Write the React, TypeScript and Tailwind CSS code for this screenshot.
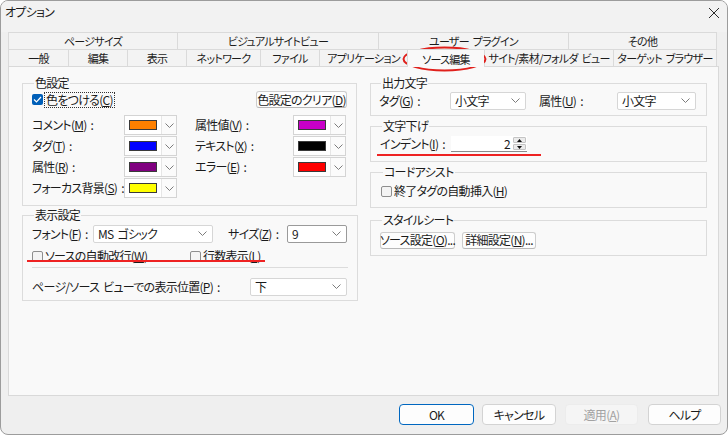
import type { ReactNode } from 'react'

const COLOR_ROWS = [
  {
    left: { label: 'コメント', key: 'M', swatch: 'bg-[#ff8000]' },
    right: { label: '属性値', key: 'V', swatch: 'bg-[#c800c8]' },
  },
  {
    left: { label: 'タグ', key: 'T', swatch: 'bg-[#0000ff]' },
    right: { label: 'テキスト', key: 'X', swatch: 'bg-black' },
  },
  {
    left: { label: '属性', key: 'R', swatch: 'bg-[#800080]' },
    right: { label: 'エラー', key: 'E', swatch: 'bg-[#ff0000]' },
  },
  {
    left: { label: 'フォーカス背景', key: 'S', swatch: 'bg-[#ffff00]' },
    right: null,
  },
]

const TOP_TABS = [
  { label: 'ページサイズ', w: 'w-[169px]' },
  { label: 'ビジュアルサイトビュー', w: 'w-[201px]' },
  { label: 'ユーザー プラグイン', w: 'w-[190px]' },
  { label: 'その他', w: 'w-[149px]' },
]

const TABS = [
  { label: '一般', w: 'w-[60px]' },
  { label: '編集', w: 'w-[59px]' },
  { label: '表示', w: 'w-[59px]' },
  { label: 'ネットワーク', w: 'w-[74px]' },
  { label: 'ファイル', w: 'w-[59px]' },
  { label: 'アプリケーション', w: 'w-[88px]' },
  { label: 'ソース編集', w: 'w-[77px]', active: true },
  { label: 'サイト/素材/フォルダ ビュー', w: 'w-[129px]' },
  { label: 'ターゲット ブラウザー', w: 'w-[104px]' },
]

function Key({ text, k, tail = '' }: { text: string; k: string; tail?: string }) {
  return (
    <span className="whitespace-nowrap">
      {text}(<u className="underline-offset-[1px]">{k}</u>){tail}
    </span>
  )
}

function Chevron() {
  return (
    <svg width="9" height="5" viewBox="0 0 9 5" className="shrink-0">
      <path d="M0.5 0.5 L4.5 4.5 L8.5 0.5" fill="none" stroke="#7c7c7c" strokeWidth="1" />
    </svg>
  )
}

function ColorCombo({ swatch }: { swatch: string }) {
  return (
    <div className="flex h-[20px] w-[53px] gap-[1px] border border-[#d4d4d4] bg-[#e6e6e6]">
      <div className="flex w-[36px] items-center justify-center bg-white">
        <div className={`h-[10px] w-[28px] border border-[#3a3a3a] ${swatch}`} />
      </div>
      <div className="flex flex-1 items-center justify-center bg-[#fbfbfb]">
        <Chevron />
      </div>
    </div>
  )
}

function Combo({ w, text, dark }: { w: string; text: string; dark?: boolean }) {
  return (
    <div
      className={`flex h-[18px] items-center justify-between rounded-[2px] border bg-white pl-[4px] pr-[5px] ${w} ${
        dark ? 'border-[#9a9a9a]' : 'border-[#d6d6d6]'
      }`}
    >
      <span className="whitespace-nowrap">{text}</span>
      <Chevron />
    </div>
  )
}

function CheckBox({ checked }: { checked?: boolean }) {
  if (checked) {
    return (
      <div className="flex h-[11px] w-[11px] shrink-0 items-center justify-center rounded-[2px] bg-[#005fb8]">
        <svg width="9" height="7" viewBox="0 0 9 7">
          <path d="M1 3.5 L3.5 6 L8 1" fill="none" stroke="white" strokeWidth="1.2" />
        </svg>
      </div>
    )
  }
  return <div className="h-[11px] w-[11px] shrink-0 rounded-[2px] border border-[#8e8e8e] bg-[#f4f4f4]" />
}

function SmallButton({ w, children }: { w: string; children: ReactNode }) {
  return (
    <div
      className={`flex h-[17px] items-center justify-center rounded-[3px] border border-[#cdcdcd] border-b-[#b8b8b8] bg-[#fdfdfd] ${w}`}
    >
      {children}
    </div>
  )
}

function Group({ title, h, className = '', children }: { title: string; h: string; className?: string; children: ReactNode }) {
  return (
    <fieldset className={`border border-[#dcdcdc] px-0 pb-0 ${h} ${className}`}>
      <legend className="ml-[2px] px-[1px] leading-[16px]">{title}</legend>
      {children}
    </fieldset>
  )
}

export default function App() {
  return (
    <div className="relative h-[435px] w-[728px] bg-white font-['Noto_Sans_CJK_JP','Noto_Sans',sans-serif] text-[12px] leading-[16px] tracking-[-0.06em] text-[#1b1b1b] [font-feature-settings:'palt'_1] [font-variant-east-asian:proportional-width] [word-spacing:2px]">
      <div className="flex h-full w-full flex-col overflow-hidden rounded-[8px] border border-[#9c9c9c] bg-[#efefef]">
        {/* title bar */}
        <div className="flex h-[31px] shrink-0 items-start justify-between bg-[#f2f2f2] pl-[4px] pr-[7px] pt-[3px]">
          <span>オプション</span>
          <svg width="12" height="12" viewBox="0 0 12 12" className="mt-[3px]">
            <path d="M1 1 L11 11 M11 1 L1 11" stroke="#2b2b2b" strokeWidth="1" />
          </svg>
        </div>

        {/* tabs */}
        <div className="ml-[7px] w-[710px] text-[11px]">
          <div className="flex h-[17px]">
            {TOP_TABS.map((t, i) => (
              <div
                key={t.label}
                className={`flex items-center justify-center border-l border-t border-[#dadada] bg-[#f3f3f3] ${t.w} ${
                  i === TOP_TABS.length - 1 ? 'border-r' : ''
                }`}
              >
                {t.label}
              </div>
            ))}
          </div>
          <div className="flex h-[17px] items-start">
            {TABS.map((t, i) => (
              <div
                key={t.label}
                className={`flex items-center justify-center overflow-hidden whitespace-nowrap border-l border-t border-[#dadada] ${t.w} ${
                  i === TABS.length - 1 ? 'border-r' : ''
                } ${t.active ? 'relative z-10 h-[18px] bg-[#f9f9f9]' : 'h-[17px] bg-[#f3f3f3]'}`}
              >
                {t.label}
              </div>
            ))}
          </div>
        </div>

        {/* panel */}
        <div className="ml-[7px] flex h-[330px] w-[711px] shrink-0 gap-[13px] border border-[#d9d9d9] bg-[#f9f9f9] pl-[13px] pt-[8px]">
          {/* left column */}
          <div className="flex w-[335px] flex-col">
            <Group title="色設定" h="h-[131px]" className="px-[9px]">
              <div className="flex h-[17px] items-center justify-between">
                <div className="flex items-center gap-[1px]">
                  <CheckBox checked />
                  <span className="border border-dotted border-[#333] px-[1px] leading-[14px]">
                    <Key text="色をつける" k="C" />
                  </span>
                </div>
                <SmallButton w="w-[91px]">
                  <Key text="色設定のクリア" k="D" />
                </SmallButton>
              </div>
              <div className="mt-[7px] flex flex-col gap-[1px]">
                {COLOR_ROWS.map((row) => (
                  <div key={row.left.key} className="flex h-[20px] items-center">
                    <div className="w-[92px]">
                      <Key text={row.left.label} k={row.left.key} tail=" :" />
                    </div>
                    <ColorCombo swatch={row.left.swatch} />
                    {row.right && (
                      <>
                        <div className="ml-[18px] w-[98px]">
                          <Key text={row.right.label} k={row.right.key} tail=" :" />
                        </div>
                        <ColorCombo swatch={row.right.swatch} />
                      </>
                    )}
                  </div>
                ))}
              </div>
            </Group>

            <Group title="表示設定" h="h-[94px]" className="mt-[1px] px-[9px]">
              <div className="mt-[1px] flex h-[19px] items-center">
                <div className="w-[61px]">
                  <Key text="フォント" k="F" tail=" :" />
                </div>
                <Combo w="w-[120px]" text="MS ゴシック" />
                <div className="ml-[15px] w-[59px]">
                  <Key text="サイズ" k="Z" tail=" :" />
                </div>
                <Combo w="w-[60px]" text="9" dark />
              </div>
              <div className="mt-[5px] flex h-[16px] items-center">
                <div className="flex w-[158px] items-center gap-[2px]">
                  <CheckBox />
                  <Key text="ソースの自動改行" k="W" />
                </div>
                <div className="flex items-center gap-[2px]">
                  <CheckBox />
                  <Key text="行数表示" k="L" />
                </div>
              </div>
              <div className="mt-[3px] h-px w-[316px] bg-[#dcdcdc]" />
              <div className="mt-[10px] flex h-[17px] items-center">
                <div className="w-[218px]">
                  <Key text="ページ/ソース ビューでの表示位置" k="P" tail=" :" />
                </div>
                <Combo w="w-[97px]" text="下" />
              </div>
            </Group>
          </div>

          {/* right column */}
          <div className="flex w-[337px] flex-col">
            <Group title="出力文字" h="h-[41px]" className="px-[8px]">
              <div className="mt-[1px] flex h-[17px] items-center">
                <div className="w-[71px]">
                  <Key text="タグ" k="G" tail=" :" />
                </div>
                <Combo w="w-[76px]" text="小文字" />
                <div className="ml-[13px] w-[78px]">
                  <Key text="属性" k="U" tail=" :" />
                </div>
                <Combo w="w-[79px]" text="小文字" />
              </div>
            </Group>

            <Group title="文字下げ" h="h-[44px]" className="mt-[2px] px-[9px]">
              <div className="mt-[2px] flex h-[16px] items-center">
                <div className="w-[71px]">
                  <Key text="インデント" k="I" tail=" :" />
                </div>
                <div className="flex h-[16px] w-[76px] border-b border-[#8a8a8a] bg-white">
                  <div className="flex-1 pr-[3px] text-right">2</div>
                  <div className="flex w-[14px] flex-col gap-[1px] py-[1px] pr-[1px]">
                    <div className="flex flex-1 items-center justify-center rounded-[1px] border border-[#c4c4c4] bg-[#ececec]">
                      <svg width="5" height="3" viewBox="0 0 5 3">
                        <path d="M0 3 L2.5 0 L5 3 Z" fill="#111" />
                      </svg>
                    </div>
                    <div className="flex flex-1 items-center justify-center rounded-[1px] border border-[#c4c4c4] bg-[#ececec]">
                      <svg width="5" height="3" viewBox="0 0 5 3">
                        <path d="M0 0 L2.5 3 L5 0 Z" fill="#111" />
                      </svg>
                    </div>
                  </div>
                </div>
              </div>
            </Group>

            <Group title="コードアシスト" h="h-[44px]" className="mt-[2px] px-[10px]">
              <div className="mt-[3px] flex h-[16px] items-center gap-[2px]">
                <CheckBox />
                <Key text="終了タグの自動挿入" k="H" />
              </div>
            </Group>

            <Group title="スタイルシート" h="h-[44px]" className="mt-[4px] px-[9px]">
              <div className="mt-[4px] flex h-[16px] items-center gap-[7px]">
                <SmallButton w="w-[75px]">
                  <Key text="ソース設定" k="O" tail="..." />
                </SmallButton>
                <SmallButton w="w-[74px]">
                  <Key text="詳細設定" k="N" tail="..." />
                </SmallButton>
              </div>
            </Group>
          </div>
        </div>

        {/* dialog buttons */}
        <div className="mt-[8px] flex justify-end pr-[6px]">
          <div className="flex h-[21px] w-[75px] items-center justify-center rounded-[4px] border border-[#0067c0] bg-[#fdfdfd]">
            OK
          </div>
          <div className="ml-[8px] flex h-[21px] w-[74px] items-center justify-center rounded-[4px] border border-[#d3d3d3] bg-[#fdfdfd]">
            キャンセル
          </div>
          <div className="ml-[9px] flex h-[21px] w-[73px] items-center justify-center rounded-[4px] border border-[#ececec] bg-[#f5f5f5] text-[#a2a2a2]">
            <Key text="適用" k="A" />
          </div>
          <div className="ml-[10px] flex h-[21px] w-[73px] items-center justify-center rounded-[4px] border border-[#d3d3d3] bg-[#fdfdfd]">
            ヘルプ
          </div>
        </div>
      </div>

      {/* red annotations */}
      <svg width="86" height="26" viewBox="0 0 86 26" className="absolute left-[402px] top-[46px]">
        <ellipse cx="42.5" cy="13" rx="41" ry="11.5" fill="none" stroke="#e0201c" strokeWidth="2" />
      </svg>
      <div className="absolute left-[27px] top-[260px] h-[2px] w-[238px] bg-[#ee2222]" />
      <div className="absolute left-[377px] top-[154px] h-[2px] w-[164px] bg-[#ee2222]" />
    </div>
  )
}
